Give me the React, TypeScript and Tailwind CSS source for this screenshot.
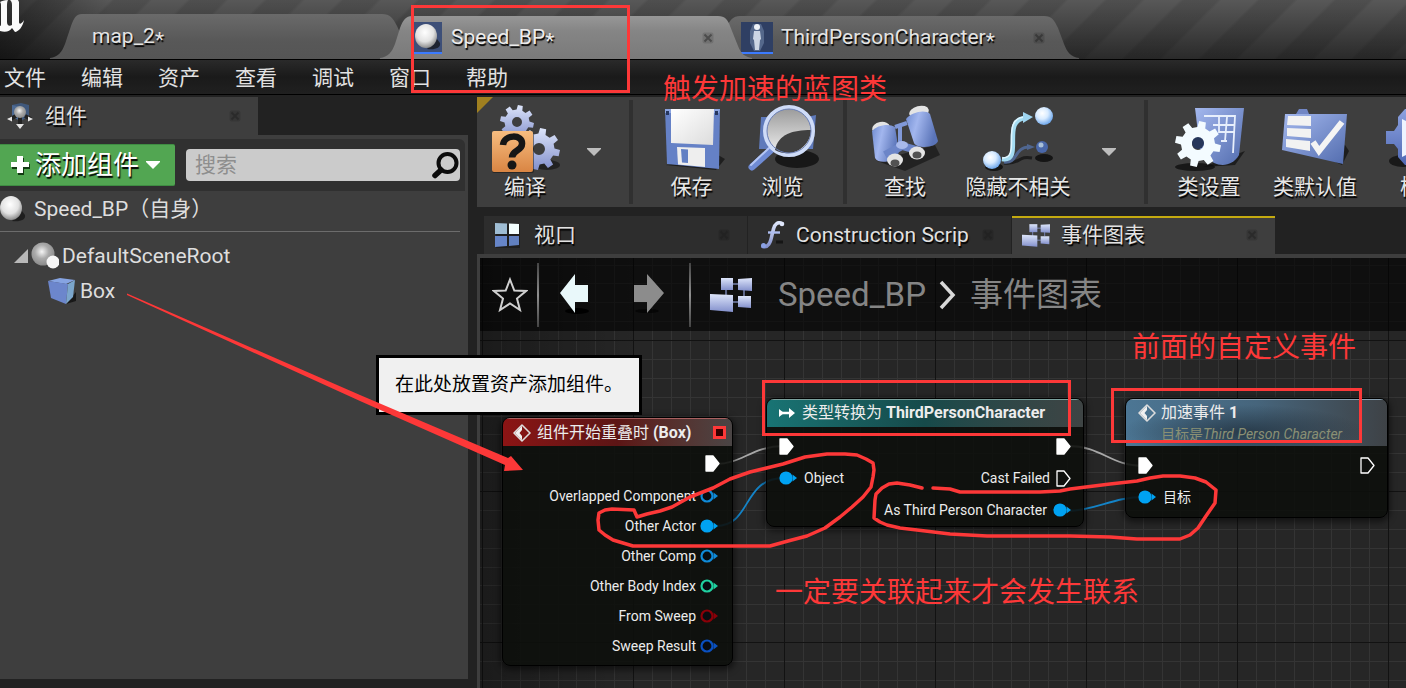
import React from "react";

const shadow = "[text-shadow:1px_2px_1px_#000]";

function gear(cx: number, cy: number, outer: number, root: number, hole: number, teeth = 8): string {
  const pts: string[] = [];
  const step = (Math.PI * 2) / teeth;
  for (let i = 0; i < teeth; i++) {
    const a = i * step + 0.2;
    [
      [root, -0.3],
      [outer, -0.19],
      [outer, 0.19],
      [root, 0.3],
    ].forEach(([r, t]) => {
      const x = cx + r * Math.cos(a + t * step);
      const y = cy + r * Math.sin(a + t * step);
      pts.push(`${x.toFixed(1)} ${y.toFixed(1)}`);
    });
  }
  return `M${pts.join("L")}ZM${cx - hole} ${cy}a${hole} ${hole} 0 1 0 ${hole * 2} 0a${hole} ${hole} 0 1 0 ${-hole * 2} 0Z`;
}

function Defs() {
  return (
    <svg className="absolute size-0" aria-hidden="true">
      <defs>
        <linearGradient id="blue" x1="0" y1="0" x2="1" y2="1">
          <stop offset="0" stopColor="#a4b8ee" />
          <stop offset="1" stopColor="#526cae" />
        </linearGradient>
        <linearGradient id="barrel" x1="0" y1="0" x2="1" y2="0.3">
          <stop offset="0" stopColor="#6f8bd0" />
          <stop offset="0.4" stopColor="#a2b6ee" />
          <stop offset="1" stopColor="#5a74b8" />
        </linearGradient>
        <linearGradient id="deep" x1="0" y1="0" x2="0" y2="1">
          <stop offset="0" stopColor="#8ca2e0" />
          <stop offset="1" stopColor="#5069b4" />
        </linearGradient>
        <linearGradient id="pale" x1="0" y1="0" x2="0" y2="1">
          <stop offset="0" stopColor="#dde5fa" />
          <stop offset="1" stopColor="#8390cc" />
        </linearGradient>
        <linearGradient id="paper" x1="0" y1="0" x2="1" y2="1">
          <stop offset="0" stopColor="#ffffff" />
          <stop offset="1" stopColor="#dcdcdc" />
        </linearGradient>
        <linearGradient id="orange" x1="0" y1="0" x2="0" y2="1">
          <stop offset="0" stopColor="#f7bd80" />
          <stop offset="1" stopColor="#d98543" />
        </linearGradient>
        <linearGradient id="glass" x1="0" y1="0" x2="0" y2="1">
          <stop offset="0" stopColor="#989898" />
          <stop offset="1" stopColor="#f2f2f2" />
        </linearGradient>
        <linearGradient id="tabOn" x1="0" y1="0" x2="0" y2="1">
          <stop offset="0" stopColor="#979797" />
          <stop offset="0.35" stopColor="#858585" />
          <stop offset="1" stopColor="#7a7a7a" />
        </linearGradient>
        <linearGradient id="tabOff" x1="0" y1="0" x2="0" y2="1">
          <stop offset="0" stopColor="#6a6a6a" />
          <stop offset="0.6" stopColor="#585858" />
          <stop offset="1" stopColor="#555555" />
        </linearGradient>
        <radialGradient id="ball" cx="0.45" cy="0.35" r="0.65">
          <stop offset="0" stopColor="#ffffff" />
          <stop offset="0.6" stopColor="#e2e2e2" />
          <stop offset="1" stopColor="#8c8c8c" />
        </radialGradient>
        <radialGradient id="greyBall" cx="0.45" cy="0.4" r="0.6">
          <stop offset="0" stopColor="#f4f4f4" />
          <stop offset="0.5" stopColor="#aaaaaa" />
          <stop offset="1" stopColor="#8a8a8a" />
        </radialGradient>
        <radialGradient id="blueBall" cx="0.4" cy="0.35" r="0.65">
          <stop offset="0" stopColor="#ffffff" />
          <stop offset="0.5" stopColor="#d8ebff" />
          <stop offset="1" stopColor="#6fa8ec" />
        </radialGradient>
      </defs>
    </svg>
  );
}

/* ---------- small icons ---------- */

function CloseIcon() {
  return (
    <svg className="size-3" viewBox="0 0 12 12" aria-hidden="true">
      <rect x="0.5" y="0.5" width="11" height="11" rx="2" fill="#000" opacity="0.12" />
      <path d="M2.5 2.5 9.5 9.5M9.5 2.5 2.5 9.5" stroke="#1c1c1c" strokeOpacity="0.45" strokeWidth="2" />
    </svg>
  );
}

function SphereIcon({ className }: { className: string }) {
  return (
    <svg className={className} viewBox="0 0 28 28" aria-hidden="true">
      <path d="M14 26C22 27 28 25 27 20L24 16Z" fill="#111" opacity="0.7" />
      <ellipse cx="13" cy="13" rx="11" ry="12" fill="url(#ball)" />
    </svg>
  );
}

function ComponentsIcon() {
  return (
    <svg className="h-7 w-7 shrink-0" viewBox="0 0 28 28" aria-hidden="true">
      <path d="M6 3 15 1 23 3V14L15 19 6 15Z" fill="#3f587c" />
      <path d="M6 3 15 5V19L6 15Z" fill="#4d6a93" />
      <path d="M4 17 10 14M25 17 19 14M14 15V23" stroke="#222" strokeWidth="4" />
      <circle cx="14" cy="10" r="6" fill="url(#greyBall)" />
      <path d="M1 17 6 14.500V19.500ZM27 17 22 14.500V19.500ZM14 27 10 22 18 22Z" fill="#e4e4e4" />
    </svg>
  );
}

function SceneRootIcon() {
  return (
    <svg className="size-7 shrink-0" viewBox="0 0 28 28" aria-hidden="true">
      <circle cx="12" cy="12" r="11.5" fill="url(#greyBall)" />
      <circle cx="22" cy="20" r="6.5" fill="#f6f6f6" />
    </svg>
  );
}

function BoxIcon() {
  return (
    <svg className="size-7 shrink-0" viewBox="0 0 28 28" aria-hidden="true">
      <path d="M18 27 28 24V15Z" fill="#181818" />
      <path d="M0 4 12 1 27 3 18 7Z" fill="#86a4e2" />
      <path d="M0 4 20 7 18 27 3 21Z" fill="#6c86cc" />
      <path d="M20 7 27 3 25 20 18 27Z" fill="#7ba6cc" />
    </svg>
  );
}

function ViewportIcon() {
  return (
    <svg className="size-7 shrink-0" viewBox="0 0 28 28" aria-hidden="true">
      <path d="M2 4 26 3V27L2 27Z" fill="#1a1a1a" opacity="0.7" />
      <path d="M1 2 13 2.5V13H1Z" fill="#9fbdd4" />
      <path d="M15 2.5 25 3V13H15Z" fill="#f4ffff" />
      <path d="M1 15H13V25L1 26Z" fill="#6685c8" />
      <path d="M15 15H25V24L15 25Z" fill="#6180bf" />
    </svg>
  );
}

function FunctionIcon() {
  return (
    <svg className="size-7 shrink-0" viewBox="0 0 28 28" aria-hidden="true">
      <path d="M18 21H25" stroke="#151515" strokeWidth="3" />
      <path d="M5 25.500C10 27 12.500 22 14 14L15.500 8C16.500 3 20 .5 24 2.500" fill="none" stroke="url(#pale)" strokeWidth="3.600" strokeLinecap="round" />
      <path d="M10 11.500H22" stroke="#aebdf0" strokeWidth="2.400" />
      <circle cx="5.500" cy="24.500" r="2.500" fill="#8aa0e4" />
      <circle cx="24" cy="3" r="2.300" fill="#dfe6fb" />
    </svg>
  );
}

function GraphIcon({ className }: { className: string }) {
  return (
    <svg className={className} viewBox="0 0 42 34" aria-hidden="true">
      <path d="M22 6H30M16 10V18M34 10V18M22 24H30" stroke="#7783b0" strokeWidth="1.500" />
      <path d="M11 0H23V12H11Z" fill="url(#pale)" />
      <path d="M28 1 42 0V13L28 12Z" fill="url(#pale)" />
      <path d="M0 16 23 17V34L0 32Z" fill="url(#pale)" />
      <path d="M28 18H41V30L28 29Z" fill="url(#pale)" />
    </svg>
  );
}

function Caret({ className }: { className: string }) {
  return (
    <svg className={className} viewBox="0 0 14 8" aria-hidden="true">
      <path d="M0 0H14V1L7 8 0 1Z" fill="currentColor" />
    </svg>
  );
}

/* ---------- toolbar drawings, each on a 72 x 68 field ---------- */

const art = "h-17 w-18 shrink-0";

function CompileArt() {
  return (
    <svg className={art} viewBox="0 0 72 68" aria-hidden="true">
      <ellipse cx="58" cy="60" rx="13" ry="5" fill="#111" opacity="0.6" />
      <path fillRule="evenodd" fill="url(#pale)" d={gear(28, 17, 17, 12.5, 5)} />
      <path fillRule="evenodd" fill="url(#pale)" d={gear(50, 44, 21, 15.5, 6)} />
      <rect x="3" y="28" width="42" height="40" rx="2" fill="#111" opacity="0.5" />
      <rect x="3" y="26" width="41" height="41" rx="2" fill="url(#orange)" />
      <path d="M14 40C15 29 34 29 33 39 33 46 23 45 23 52.500" fill="none" stroke="#161616" strokeWidth="6.500" />
      <circle cx="23" cy="60" r="4.500" fill="#161616" />
    </svg>
  );
}

function SaveArt() {
  return (
    <svg className={art} viewBox="0 0 72 68" aria-hidden="true">
      <path d="M10 60 60 65 69 54 62 50Z" fill="#111" opacity="0.7" />
      <path d="M9 4H64L63 64 11 59Z" fill="#6581c6" />
      <path d="M9 4H64L63 8H9Z" fill="#8ba4e0" />
      <path d="M15 4H58L57 40 15 38Z" fill="url(#paper)" />
      <path d="M21 42 49 43V62L22 59.500Z" fill="#eeeeee" />
      <path d="M25 44 32 44.500V58L26 57.500Z" fill="#6280c4" />
      <path d="M10 6H13V10H10ZM59 6H62V10H59Z" fill="#26365e" />
    </svg>
  );
}

function BrowseArt() {
  return (
    <svg className={art} viewBox="0 0 72 68" aria-hidden="true">
      <ellipse cx="50" cy="54" rx="22" ry="9" fill="#0c0c0c" opacity="0.75" />
      <path d="M14 12H36L50 14 69 10 66 44H12Z" fill="#5f7abb" />
      <path d="M5 62 24 45" stroke="#6f8bd4" strokeWidth="7" strokeLinecap="round" />
      <path d="M4 60 22 43" stroke="#b4c6f4" strokeWidth="2" strokeLinecap="round" />
      <circle cx="42" cy="26" r="24" fill="url(#glass)" stroke="#cfdcf8" strokeWidth="4" />
      <path d="M28 45C31 29 46 25 64 25 64 40 46 55 28 45Z" fill="#404040" />
      <circle cx="42" cy="26" r="22" fill="none" stroke="#6b7fb5" strokeWidth="1" />
    </svg>
  );
}

function FindArt() {
  return (
    <svg className={art} viewBox="0 0 72 68" aria-hidden="true">
      <path d="M8 56 36 66 71 50 66 40Z" fill="#101010" opacity="0.6" />
      <ellipse cx="12" cy="23" rx="9" ry="6" fill="#e4e4e4" transform="rotate(-10 12 23)" />
      <ellipse cx="50" cy="7" rx="10" ry="6" fill="#e4e4e4" transform="rotate(-15 50 7)" />
      <path d="M3 26C8 20 20 18 26 22L30 47C26 57 10 60 6 53Z" fill="url(#barrel)" />
      <path d="M37 14C43 7 56 4 61 9L69 36C67 43 48 44 45 38Z" fill="url(#barrel)" />
      <path d="M26 22 38 18M31 20V40" stroke="#8199d8" strokeWidth="4" />
      <path d="M16 50 33 41 51 46" fill="none" stroke="#6c85c8" strokeWidth="8" />
      <ellipse cx="33" cy="40" rx="6" ry="4" fill="#a8b9ea" />
      <ellipse cx="26" cy="55" rx="8" ry="6.500" fill="#e4e4e4" />
      <ellipse cx="26" cy="58" rx="4.500" ry="3.500" fill="#525252" />
      <ellipse cx="48" cy="48" rx="8" ry="6.500" fill="#e4e4e4" />
      <ellipse cx="48" cy="50" rx="4.500" ry="3.500" fill="#525252" />
    </svg>
  );
}

function HideArt() {
  return (
    <svg className={art} viewBox="0 0 72 68" aria-hidden="true">
      <ellipse cx="62" cy="53" rx="9" ry="4" fill="#151515" />
      <ellipse cx="12" cy="62" rx="9" ry="4" fill="#151515" />
      <path d="M22 58C38 60 36 50 50 53" fill="none" stroke="#1d1d1d" strokeWidth="3" />
      <path d="M22 57C36 59 32 42 47 42" fill="none" stroke="#4f6690" strokeWidth="3" />
      <path d="M45 39 53 42 45 45Z" fill="#4f6690" />
      <path d="M20 54C43 58 18 14 44 13" fill="none" stroke="#a4dcf2" strokeWidth="4.500" />
      <path d="M20 53C40 54 18 14 42 12" fill="none" stroke="#e0f6ff" strokeWidth="1.500" />
      <path d="M41 7 51 12 41 18Z" fill="#9ed4f0" />
      <circle cx="62" cy="11" r="9" fill="url(#blueBall)" />
      <circle cx="10" cy="55" r="9" fill="url(#blueBall)" />
      <circle cx="60" cy="42" r="6" fill="#4a68aa" />
      <circle cx="59" cy="40" r="2.500" fill="#a9c0d8" />
    </svg>
  );
}

function SettingsArt() {
  return (
    <svg className={art} viewBox="0 0 72 68" aria-hidden="true">
      <path d="M30 62 62 60 72 46Z" fill="#101010" opacity="0.7" />
      <ellipse cx="22" cy="62" rx="20" ry="4" fill="#0f0f0f" opacity="0.8" />
      <path d="M22 3H71L66 50C60 60 50 62 41 58L27 44Z" fill="url(#blue)" />
      <path d="M31 11H62L60 48M40 20H61M46 27H61M48 36H54M46 12V28M54 12 52 36" stroke="#e7effc" strokeWidth="1.800" fill="none" />
      <path fillRule="evenodd" fill="#f3fbff" d={gear(25, 39, 23, 17, 6)} />
      <circle cx="25" cy="38" r="6" fill="#26365a" />
    </svg>
  );
}

function DefaultsArt() {
  return (
    <svg className={art} viewBox="0 0 72 68" aria-hidden="true">
      <path d="M50 54 63 60 70 46 66 40Z" fill="#101010" opacity="0.7" />
      <path d="M17 9 20 4H28L30 9Z" fill="#7186c4" />
      <path d="M6 9H68L64 59 3 45Z" fill="url(#blue)" />
      <path d="M9 11H32V21L8 20ZM8 23 32 24V33L8 31ZM7 34 31 36V46L7 42Z" fill="#f2f2f2" />
      <path d="M34 37 40 46 63 17" fill="none" stroke="#f4f4f4" strokeWidth="6" />
    </svg>
  );
}

function SimulateArt() {
  return (
    <svg className={art} viewBox="0 0 72 68" aria-hidden="true">
      <ellipse cx="18" cy="56" rx="14" ry="6" fill="#101010" opacity="0.8" />
      <path d="M1 26H9L13 20V12L20 4H52V60H20L13 52V44L9 39H1Z" fill="url(#deep)" />
      <path d="M17 14V52L56 33Z" fill="#eef4ff" />
    </svg>
  );
}

/* ---------- title bar ---------- */

function TitleBar() {
  return (
    <header className="relative flex h-[60px] items-end overflow-hidden border-b border-black bg-[linear-gradient(90deg,rgba(0,0,0,0.45),transparent_110px),repeating-linear-gradient(135deg,transparent_0_24px,rgba(0,0,0,0.1)_27px_51px,transparent_54px),linear-gradient(#585858,#2a2a2a)]">
      <div className="w-[50px] shrink-0 self-stretch">
        <svg className="h-9 w-6" viewBox="0 0 24 36" aria-label="Unreal" role="img">
          <path d="M0 2C2 1 4 0 8 0 7 2 7 4 7 9V22C7 25 9 27 12 25V5C12 2 11 1 10 0H18L19 2V22C19 24 21 25 24 20 23 27 18 32 15 32L12 28C10 31 6 33 0 31V26C1 26 1 25 1 22V6C1 4 1 3 0 2Z" fill="#fafafa" />
        </svg>
      </div>
      <div className="relative flex h-[45px] w-[362px] shrink-0 items-center pt-0.5 pl-[42px]">
        <svg className="absolute inset-0 size-full" viewBox="0 0 362 45" preserveAspectRatio="none" aria-hidden="true">
          <path d="M0 45V44C8 43 12 38 15 30L21 12C24 4 26 0 32 0H332C340 0 343 4 347 12L362 45Z" fill="url(#tabOff)" />
        </svg>
        <button className={`relative text-[21px] leading-7 text-[#e4e4e4] ${shadow}`}>
          map_2<span className="align-[-4px]">*</span>
        </button>
      </div>
      <div className="relative z-10 -ml-8 flex h-[43px] w-[372px] shrink-0 items-center pr-[38px] pl-8">
        <svg className="absolute inset-0 size-full" viewBox="0 0 372 43" preserveAspectRatio="none" aria-hidden="true">
          <path d="M0 43V42C8 41 12 36 15 28L20 12C23 4 26 0 32 0H338C345 0 348 4 350 10L358 30C361 38 365 41 372 42V43Z" fill="url(#tabOn)" />
        </svg>
        <span className="relative flex h-8 w-[30px] items-center justify-center border-b-2 border-[#3c7bff] bg-[#3d4f78]">
          <SphereIcon className="size-7" />
        </span>
        <button className={`relative ml-[9px] pt-0.5 text-[21px] leading-7 text-[#ececec] ${shadow}`}>
          Speed_BP<span className="align-[-4px]">*</span>
        </button>
        <button className="relative ml-auto" aria-label="Close Speed_BP">
          <CloseIcon />
        </button>
      </div>
      <div className="relative -ml-[46px] flex h-[43px] w-[373px] shrink-0 items-center pr-[34px] pl-[35px]">
        <svg className="absolute inset-0 size-full" viewBox="0 0 373 43" preserveAspectRatio="none" aria-hidden="true">
          <path d="M0 43 20 12C24 4 27 0 34 0H338C346 0 348 4 352 12L358 28C361 36 365 41 373 42V43Z" fill="url(#tabOff)" />
        </svg>
        <span className="relative flex h-8 w-8 items-center justify-center border-b-2 border-[#3c7bff] bg-[#2f3f63]">
          <svg className="h-7 w-4" viewBox="0 0 16 28" aria-hidden="true">
            <path d="M4 1H12L15 8V20L11 28H5L1 20V8Z" fill="#9fb4d8" opacity="0.35" />
            <circle cx="8" cy="4" r="3" fill="#eef2f8" />
            <path d="M5 8H11L12 16L11 17 10 27H6L5 17L4 16Z" fill="#cdd6e4" />
          </svg>
        </span>
        <button className={`relative ml-2 pt-0.5 text-[21px] leading-7 text-[#e4e4e4] ${shadow}`}>
          ThirdPersonCharacter<span className="align-[-4px]">*</span>
        </button>
        <button className="relative ml-auto" aria-label="Close ThirdPersonCharacter">
          <CloseIcon />
        </button>
      </div>
    </header>
  );
}

function MenuBar() {
  const items = ["文件", "编辑", "资产", "查看", "调试", "窗口", "帮助"];
  return (
    <nav className="flex h-[35px] items-center gap-[35px] border-b border-black bg-linear-to-b from-[#2a2a2a] via-[#1a1a1a] to-[#202020] pt-0.5 pl-1">
      {items.map((t) => (
        <button key={t} className="text-[21px] leading-7 whitespace-nowrap text-[#e2e2e2]">
          {t}
        </button>
      ))}
    </nav>
  );
}

/* ---------- components panel ---------- */

function ComponentsPanel() {
  return (
    <aside className="mb-[9px] flex w-[468px] shrink-0 flex-col text-[21px] leading-7 text-[#dedede]">
      <div className="flex h-[38px] w-[258px] items-center bg-[#3e3e3e] pr-[17px] pl-1.5">
        <ComponentsIcon />
        <h2 className={`ml-[11px] ${shadow}`}>组件</h2>
        <button className="ml-auto" aria-label="Close 组件">
          <CloseIcon />
        </button>
      </div>
      <div className="flex-1 bg-[#3e3e3e] pt-1">
        <div className="mr-[3px] flex h-[52px] items-center rounded-tr-md bg-[#303030] pr-[5px]">
          <button className={`flex h-[42px] w-[175px] items-center rounded-r-xs border-y border-[#3f8d43] bg-[#52a652] pl-2.5 text-[26px] leading-9 text-white ${shadow}`}>
            <svg className="mr-[5px] size-5" viewBox="0 0 20 20" aria-hidden="true">
              <path d="M8 3H14V9H20V14H14V20H8V14H2V9H8Z" fill="#123a12" />
              <path d="M7 1H13V7H19V12H13V18H7V12H1V7H7Z" fill="#fff" />
            </svg>
            添加组件
            <Caret className="ml-[7px] h-2 w-3.5" />
          </button>
          <div className="ml-[11px] flex h-8 flex-1 items-center rounded-sm bg-[#cbcbcb]">
            <input
              aria-label="搜索"
              className="h-full w-full bg-transparent pl-[9px] text-[#1c1c1c] outline-none placeholder:text-[#8e8e8e]"
              placeholder="搜索"
            />
            <svg className="mr-px size-7 shrink-0" viewBox="0 0 28 28" aria-hidden="true">
              <circle cx="16.500" cy="12" r="9" fill="none" stroke="#0c0c0c" strokeWidth="4" />
              <path d="M10 19 4 24.500" stroke="#0c0c0c" strokeWidth="5.500" strokeLinecap="round" />
            </svg>
          </div>
        </div>
        <div className="flex h-10 items-center pb-1">
          <SphereIcon className="-ml-0.5 size-7" />
          <button className="ml-2 whitespace-nowrap">Speed_BP（自身）</button>
        </div>
        <hr className="mr-2 border-[#6c6c6c]" />
        <ul className="pt-1.5">
          <li className="flex h-[35px] items-center pl-3.5">
            <svg className="mr-[3px] size-3.5" viewBox="0 0 14 14" aria-hidden="true">
              <path d="M14 0V14H0Z" fill="#b8b8b8" />
            </svg>
            <SceneRootIcon />
            <button className="ml-[3px]">DefaultSceneRoot</button>
          </li>
          <li className="flex h-[35px] items-center pl-12">
            <BoxIcon />
            <button className="ml-1">Box</button>
          </li>
        </ul>
      </div>
    </aside>
  );
}

/* ---------- toolbar and graph tabs ---------- */

function Tool({ label, width, children }: { label: string; width: string; children: React.ReactNode }) {
  return (
    <button className={`flex shrink-0 flex-col items-center pt-2 ${width}`}>
      {children}
      <span className={`text-[21px] leading-7 whitespace-nowrap text-[#e6e6e6] ${shadow}`}>{label}</span>
    </button>
  );
}

function Divider({ margin }: { margin: string }) {
  return <span className={`my-[3px] w-1 shrink-0 bg-[#303030] ${margin}`} />;
}

function Toolbar() {
  return (
    <div className="relative flex h-[110px] overflow-hidden bg-[#3e3e3e] pl-2">
      <span className="absolute top-0 left-0 size-4 bg-[#a08020] [clip-path:polygon(0_0,100%_0,0_100%)]" />
      <Tool label="编译" width="w-20"><CompileArt /></Tool>
      <button className="flex w-[58px] shrink-0 items-center justify-center text-[#bdbdbd]" aria-label="编译选项">
        <Caret className="h-2 w-3.5" />
      </button>
      <Divider margin="ml-1.5 mr-[13px]" />
      <Tool label="保存" width="w-[91px]"><SaveArt /></Tool>
      <Tool label="浏览" width="w-[91px]"><BrowseArt /></Tool>
      <Divider margin="mx-[15px]" />
      <Tool label="查找" width="w-[86px]"><FindArt /></Tool>
      <Tool label="隐藏不相关" width="w-[140px]"><HideArt /></Tool>
      <button className="flex w-[42px] shrink-0 items-center justify-center text-[#bdbdbd]" aria-label="隐藏选项">
        <Caret className="h-2 w-3.5" />
      </button>
      <Divider margin="ml-3.5 mr-2" />
      <Tool label="类设置" width="w-[106px]"><SettingsArt /></Tool>
      <Tool label="类默认值" width="w-[106px]"><DefaultsArt /></Tool>
      <Tool label="模拟" width="w-[106px]"><SimulateArt /></Tool>
    </div>
  );
}

function GraphTab({ label, active, gap, children }: { label: string; active?: boolean; gap: string; children: React.ReactNode }) {
  return (
    <div
      className={`flex h-[38px] w-[263px] shrink-0 items-center border-t-2 pr-[17px] pb-0.5 pl-2.5 ${
        active ? "border-[#c4aa10] bg-[#3e3e3e]" : "border-[#2d2d2d] bg-[#2d2d2d]"
      }`}
    >
      {children}
      <button className={`text-[21px] leading-8 whitespace-nowrap text-[#e2e2e2] ${gap} ${shadow}`}>{label}</button>
      <button className="ml-auto shrink-0" aria-label={`Close ${label}`}>
        <CloseIcon />
      </button>
    </div>
  );
}

/* ---------- graph ---------- */

function ExecPin({ open }: { open?: boolean }) {
  return (
    <svg className="h-[17px] w-[15px] shrink-0" viewBox="0 0 15 17" aria-hidden="true">
      <path d="M1 1H8L14 8.500 8 16H1Z" fill={open ? "none" : "#fff"} stroke="#fff" strokeWidth="1.300" strokeLinejoin="round" />
    </svg>
  );
}

function DataPin({ color, filled }: { color: string; filled?: boolean }) {
  return (
    <svg className="h-3.5 w-[18px] shrink-0" viewBox="0 0 18 14" aria-hidden="true">
      <path d="M13.500 3.500 18 7 13.500 10.500Z" fill={color} />
      <circle cx="7" cy="7" r="5.500" fill={filled ? color : "#080c10"} stroke={color} strokeWidth="2.200" />
    </svg>
  );
}

function EventIcon() {
  return (
    <svg className="size-[18px] shrink-0" viewBox="0 0 18 18" aria-hidden="true">
      <path d="M9 1 17 9 9 17 1 9Z" fill="none" stroke="#dcdcdc" strokeWidth="1.600" strokeLinejoin="round" />
      <path d="M9 2V6L6.500 9 9 12V16L2 9Z" fill="#f0f0f0" />
    </svg>
  );
}

const nodeBox =
  "absolute flex flex-col overflow-hidden rounded-lg border border-black bg-[#0d0f0c]/90 text-[14px] leading-5 text-[#ececec] shadow-[0_2px_6px_2px_rgba(0,0,0,0.5)]";

function Graph() {
  const outputs = [
    { label: "Overlapped Component", color: "#0f8ad8" },
    { label: "Other Actor", color: "#00a2f2", filled: true },
    { label: "Other Comp", color: "#0f8ad8" },
    { label: "Other Body Index", color: "#1fd0a0" },
    { label: "From Sweep", color: "#8a0008" },
    { label: "Sweep Result", color: "#0a50c0" },
  ];
  const minor = [19, 38, 57, 76, 94, 113, 132];
  return (
    <div className="relative min-h-[430px] flex-1 overflow-hidden bg-[#262626]">
      <svg className="absolute inset-0 size-full" aria-hidden="true">
        <defs>
          <pattern id="grid" x="2" y="82" width="151" height="151" patternUnits="userSpaceOnUse">
            {minor.map((m) => (
              <path key={m} d={`M${m + 0.5} 0V151M0 ${m + 0.5}H151`} stroke="#343434" />
            ))}
            <path d="M0.500 0V151M0 0.500H151" stroke="#121212" />
          </pattern>
          <linearGradient id="edge">
            <stop offset="0" stopColor="#000" stopOpacity="0.3" />
            <stop offset="1" stopColor="#000" stopOpacity="0" />
          </linearGradient>
        </defs>
        <rect width="100%" height="100%" fill="url(#grid)" />
        <rect width="160" height="100%" fill="url(#edge)" />
        <g fill="none" strokeWidth="1.800">
          <path d="M236 206C262 206 272 188 304 188" stroke="#a8a8a8" />
          <path d="M236 268C272 268 262 220 304 220" stroke="#1484c8" />
          <path d="M588 188C622 188 630 208 664 208" stroke="#a8a8a8" />
          <path d="M586 253C616 253 632 239 664 239" stroke="#1484c8" />
        </g>
      </svg>

      <div className="relative flex h-[73px] items-center bg-black/60 pl-3 text-[33px] leading-10 text-[#858585]">
        <button aria-label="Favourite">
          <svg className="size-9" viewBox="0 0 36 36" aria-hidden="true">
            <path d="M18 2.500 22.300 13.500 34 14 25 21.500 28 33 18 26.500 8 33 11 21.500 2 14 13.700 13.500Z" fill="none" stroke="#d0d0d0" strokeWidth="2" />
          </svg>
        </button>
        <span className="ml-[9px] h-16 w-0.5 bg-linear-to-b from-[#444] via-[#909090] to-[#444]" />
        <button className="ml-5" aria-label="Back">
          <svg className="h-11 w-8" viewBox="0 0 32 44" aria-hidden="true">
            <ellipse cx="18" cy="38" rx="12" ry="3" fill="#000" />
            <path d="M1 20 16 1V12H29V29H16V40Z" fill="#e9f8fa" />
          </svg>
        </button>
        <button className="ml-[42px]" aria-label="Forward">
          <svg className="h-11 w-8" viewBox="0 0 32 44" aria-hidden="true">
            <ellipse cx="14" cy="38" rx="12" ry="2" fill="#000" opacity="0.6" />
            <path d="M31 20 14 1V12H1V29H14V40Z" fill="#8c8c8c" />
          </svg>
        </button>
        <span className="ml-6 h-16 w-0.5 bg-linear-to-b from-[#444] via-[#909090] to-[#444]" />
        <GraphIcon className="ml-[19px] h-[34px] w-[42px]" />
        <button className="ml-[26px]">Speed_BP</button>
        <svg className="mx-3 h-8 w-5" viewBox="0 0 20 32" aria-hidden="true">
          <path d="M3 3 15 16 3 29" fill="none" stroke="#d8d8d8" strokeWidth="3.500" />
        </svg>
        <button className="whitespace-nowrap">事件图表</button>
      </div>

      <section className={`${nodeBox} top-[159px] left-[22px] w-[231px]`}>
        <div className="flex h-7 items-center border-t border-[#a86060] bg-linear-to-r from-[#8c1414] via-[#5c1515] to-[#4a4545] pr-1.5 pl-2.5 text-[16px] font-bold">
          <EventIcon />
          <h3 className="ml-1.5 whitespace-nowrap"><span className="font-normal">组件开始重叠时</span> (Box)</h3>
          <span className="ml-auto size-[13px] border-[3px] border-[#fd3838] bg-[#300]" />
        </div>
        <div className="flex h-[35px] items-center justify-end pr-3">
          <ExecPin />
        </div>
        {outputs.map((o) => (
          <div key={o.label} className="flex h-[30px] items-center justify-end gap-1 pr-3.5">
            {o.label}
            <DataPin color={o.color} filled={o.filled} />
          </div>
        ))}
        <div className="h-1" />
      </section>

      <section className={`${nodeBox} top-[140px] left-[286px] w-[318px]`}>
        <div className="flex h-7 items-center border-t border-[#7aa09c] bg-linear-to-r from-[#187474] via-[#164a4a] to-[#3e4444] pb-0.5 pl-3 text-[16px] font-bold">
          <svg className="h-3 w-4 shrink-0" viewBox="0 0 16 12" aria-hidden="true">
            <path d="M0 2 5 6 0 10ZM10 1 16 6 10 11Z" fill="#fff" />
            <path d="M1 6H12" stroke="#fff" strokeWidth="2.500" />
          </svg>
          <h3 className="ml-[7px] whitespace-nowrap"><span className="font-normal">类型转换为</span> ThirdPersonCharacter</h3>
        </div>
        <div className="flex justify-between px-3 pt-[3px]">
          <div>
            <div className="flex h-8 items-center"><ExecPin /></div>
            <div className="flex h-8 items-center gap-[7px]"><DataPin color="#00a2f2" filled />Object</div>
          </div>
          <div>
            <div className="flex h-8 items-center justify-end"><ExecPin /></div>
            <div className="flex h-8 items-center justify-end gap-1.5">Cast Failed<ExecPin open /></div>
            <div className="flex h-8 items-center justify-end gap-1.5">As Third Person Character<DataPin color="#00a2f2" filled /></div>
          </div>
        </div>
      </section>

      <section className={`${nodeBox} top-[140px] left-[645px] w-[263px]`}>
        <div className="flex h-[47px] border-t border-[#8aa0b0] bg-[radial-gradient(ellipse_at_45%_70%,rgba(20,30,40,0.6),transparent_60%),linear-gradient(90deg,#4c7694,#46657c_50%,#3e4246)] pt-1 pl-3">
          <EventIcon />
          <div className="ml-[5px] whitespace-nowrap">
            <h3 className="text-[16px] leading-[18px] font-bold"><span className="font-normal">加速事件</span> 1</h3>
            <p className="pt-0.5 text-[14px] leading-5 text-[#8a9074] italic"><span className="not-italic">目标是</span>Third Person Character</p>
          </div>
        </div>
        <div className="flex justify-between px-3 pt-[3px] pb-1">
          <div>
            <div className="flex h-8 items-center"><ExecPin /></div>
            <div className="flex h-8 items-center gap-[7px]"><DataPin color="#00a2f2" filled />目标</div>
          </div>
          <div className="flex h-8 items-center"><ExecPin open /></div>
        </div>
      </section>
    </div>
  );
}

/* ---------- hand-drawn notes over the editor ---------- */

function Notes() {
  const note = "absolute text-[28px] leading-9 whitespace-nowrap text-[#fd3838] font-['Noto_Sans_CJK_SC',sans-serif]";
  return (
    <div className="pointer-events-none absolute inset-0 z-30">
      <svg className="absolute top-0 left-0 h-[688px] w-[1406px]" viewBox="0 0 1406 688" aria-hidden="true">
        <g fill="none" stroke="#fd3838" strokeWidth="3">
          <path d="M412.500 6.500H628.500V91.500H412.500Z" />
          <path d="M763.500 381.500H1069.500V434.500H763.500Z" />
          <path d="M1112.500 389.500H1360.500V441.500H1112.500Z" />
          <path
            d="M634 510 637 517 647 514 660 511 672 507 690 497 713 488 730 479 750 472 783 464 805 457 827 454 845 454 857 455 866 459 873 463 874 470 873 477 871 487 863 497 852 507 840 517 825 528 807 536 788 541 770 546 740 546H633L613 540 605 535 599 530 598 520 599 513 605 510 612 509Z"
            strokeWidth="3.500"
            strokeLinejoin="round"
          />
          <path
            d="M922 488 910 485 897 483 889 484 882 488 876 494 875 500 874 518 880 522 887 525 900 528 917 530 950 534 987 536 1070 536 1110 537 1137 539H1180L1190 535 1198 528 1206 516 1215 503 1216 490 1206 482 1195 478 1180 476 1163 476 1150 478 1137 481 1110 484 1070 489 1060 491 1040 492 960 492 950 489 933 488"
            strokeWidth="3.500"
            strokeLinejoin="round"
            strokeLinecap="round"
          />
        </g>
        <path d="M127 293.500 360 395 508 458 511 456 523 470 504 471 505 465 360 401 127 295Z" fill="#fd3838" />
      </svg>
      <p className={`${note} top-[69px] left-[663px]`}>触发加速的蓝图类</p>
      <p className={`${note} top-[327px] left-[1132px]`}>前面的自定义事件</p>
      <p className={`${note} top-[572px] left-[775px]`}>一定要关联起来才会发生联系</p>
    </div>
  );
}

export default function App() {
  return (
    <div className="relative flex min-h-screen flex-col overflow-hidden bg-[#222222] font-['Roboto','Noto_Sans_CJK_SC',sans-serif]">
      <Defs />
      <TitleBar />
      <MenuBar />
      <main className="flex flex-1 gap-[9px] pt-0.5">
        <ComponentsPanel />
        <div className="flex min-w-0 flex-1 flex-col">
          <Toolbar />
          <div className="flex h-[47px] items-end gap-px pl-[7px]">
            <GraphTab label="视口" gap="ml-3"><ViewportIcon /></GraphTab>
            <GraphTab label="Construction Scrip" gap="ml-2.5"><FunctionIcon /></GraphTab>
            <GraphTab label="事件图表" active gap="ml-[11px]"><GraphIcon className="h-[23px] w-7 shrink-0" /></GraphTab>
          </div>
          <div className="flex flex-1 flex-col border-t-4 border-l-[3px] border-[#3e3e3e]">
            <Graph />
          </div>
        </div>
      </main>
      <div
        role="tooltip"
        className="absolute top-[355px] left-[376px] z-20 border-[3px] border-black bg-[#f0f0f0] px-4 py-[13px] text-[19px] leading-7 whitespace-nowrap text-black"
      >
        在此处放置资产添加组件。
      </div>
      <Notes />
    </div>
  );
}
